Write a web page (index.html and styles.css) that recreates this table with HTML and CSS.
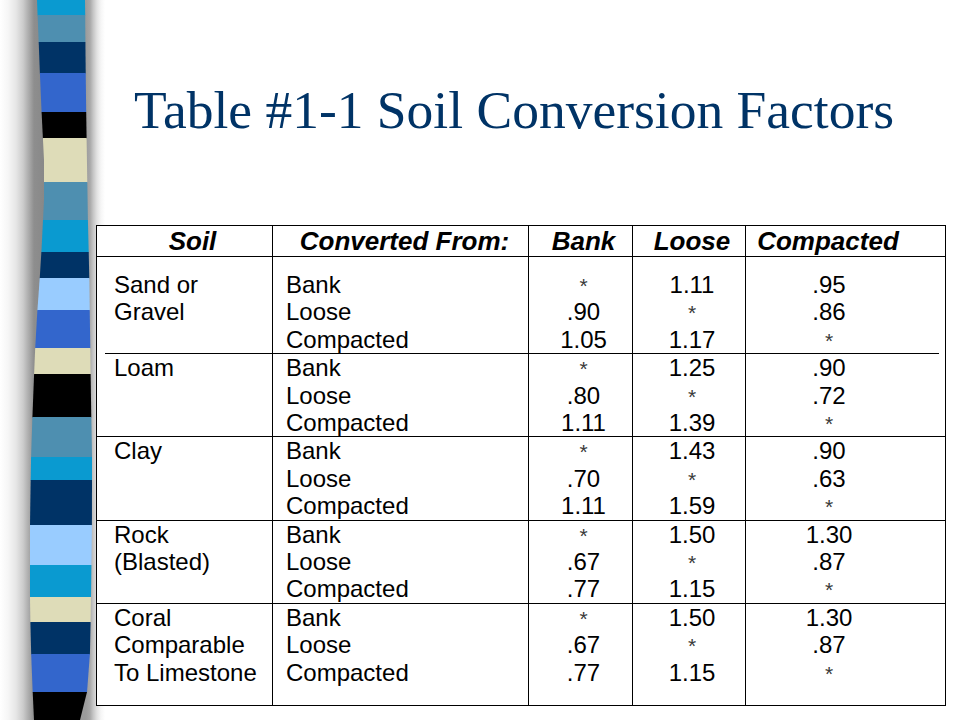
FILE: index.html
```html
<!DOCTYPE html>
<html>
<head>
<meta charset="utf-8">
<title>Table #1-1 Soil Conversion Factors</title>
<link rel="stylesheet" href="styles.css">
</head>
<body>
<div class="slide">
  <svg class="stripe" viewBox="0 0 110 720" width="110" height="720">
    <polygon fill="#0a9ad0" points="37,0 85,0 85.2,15.5 37.6,15.5"/>
    <polygon fill="#4e8fb0" points="37.6,15 85.2,15 85.4,42.5 38.7,42.5"/>
    <polygon fill="#003366" points="38.7,42 85.4,42 85.7,73.5 39.9,73.5"/>
    <polygon fill="#3366cc" points="39.9,73 85.7,73 86.2,112.5 41.6,112.5"/>
    <polygon fill="#000000" points="41.6,112 86.2,112 86.6,138.5 42.9,138.5"/>
    <polygon fill="#dedcb8" points="42.9,138 86.6,138 87.3,182.5 44,182.5 44,160"/>
    <polygon fill="#4e8fb0" points="44,182 87.3,182 87.9,220.5 43,220.5 44,200"/>
    <polygon fill="#0a9ad0" points="43,220 87.9,220 88.7,252.5 41.4,252.5"/>
    <polygon fill="#003366" points="41.4,252 88.7,252 89.3,278.5 39.7,278.5"/>
    <polygon fill="#99ccff" points="39.7,278 89.3,278 89.7,310.5 37.4,310.5"/>
    <polygon fill="#3366cc" points="37.4,310 89.7,310 90.3,348.5 35.2,348.5"/>
    <polygon fill="#dedcb8" points="35.2,348 90.3,348 90.6,374.5 34.1,374.5"/>
    <polygon fill="#000000" points="34.1,374 90.6,374 91.3,417.5 32.4,417.5"/>
    <polygon fill="#4e8fb0" points="32.4,417 91.3,417 92,457.5 31.1,457.5"/>
    <polygon fill="#0a9ad0" points="31.1,457 92,457 92,480.5 30.7,480.5"/>
    <polygon fill="#003366" points="30.7,480 92,480 91.9,525.5 30,525.5"/>
    <polygon fill="#99ccff" points="30,525 91.9,525 91.4,565.5 30,565.5"/>
    <polygon fill="#0a9ad0" points="30,565 91.4,565 91,597.5 30,597.5"/>
    <polygon fill="#dedcb8" points="30,597 91,597 90.6,622.5 30.4,622.5"/>
    <polygon fill="#003366" points="30.4,622 90.6,622 89.9,654.5 31.2,654.5"/>
    <polygon fill="#3366cc" points="31.2,654 89.9,654 87,692.5 32.7,692.5"/>
    <polygon fill="#000000" points="32.7,692 87,692 80,720 34,720"/>
  </svg>
  <main class="content">
    <h1 class="title">Table #1-1 Soil Conversion Factors</h1>
    <table class="factors">
      <colgroup>
        <col class="w-soil"><col class="w-from"><col class="w-bank"><col class="w-loose"><col class="w-comp">
      </colgroup>
      <thead>
        <tr>
          <th class="h-soil">Soil</th>
          <th class="h-from">Converted From:</th>
          <th class="h-num">Bank</th>
          <th class="h-num">Loose</th>
          <th class="h-comp">Compacted</th>
        </tr>
      </thead>
      <tbody>
        <tr class="first">
          <td class="soil">Sand or<br>Gravel</td>
          <td class="from">Bank<br>Loose<br>Compacted</td>
          <td class="num"><span class="ast">*</span><br>.90<br>1.05</td>
          <td class="num">1.11<br><span class="ast">*</span><br>1.17</td>
          <td class="comp">.95<br>.86<br><span class="ast">*</span></td>
        </tr>
        <tr class="rule"><td colspan="5"><div class="rule-line"></div></td></tr>
        <tr>
          <td class="soil">Loam</td>
          <td class="from">Bank<br>Loose<br>Compacted</td>
          <td class="num"><span class="ast">*</span><br>.80<br>1.11</td>
          <td class="num">1.25<br><span class="ast">*</span><br>1.39</td>
          <td class="comp">.90<br>.72<br><span class="ast">*</span></td>
        </tr>
        <tr class="sep">
          <td class="soil">Clay</td>
          <td class="from">Bank<br>Loose<br>Compacted</td>
          <td class="num"><span class="ast">*</span><br>.70<br>1.11</td>
          <td class="num">1.43<br><span class="ast">*</span><br>1.59</td>
          <td class="comp">.90<br>.63<br><span class="ast">*</span></td>
        </tr>
        <tr class="sep">
          <td class="soil">Rock<br>(Blasted)</td>
          <td class="from">Bank<br>Loose<br>Compacted</td>
          <td class="num"><span class="ast">*</span><br>.67<br>.77</td>
          <td class="num">1.50<br><span class="ast">*</span><br>1.15</td>
          <td class="comp">1.30<br>.87<br><span class="ast">*</span></td>
        </tr>
        <tr class="sep last">
          <td class="soil">Coral<br>Comparable<br>To Limestone</td>
          <td class="from">Bank<br>Loose<br>Compacted</td>
          <td class="num"><span class="ast">*</span><br>.67<br>.77</td>
          <td class="num">1.50<br><span class="ast">*</span><br>1.15</td>
          <td class="comp">1.30<br>.87<br><span class="ast">*</span></td>
        </tr>
      </tbody>
    </table>
  </main>
</div>
</body>
</html>
```

FILE: styles.css
```css
html, body {
  margin: 0;
  padding: 0;
  background: #ffffff;
}

body {
  width: 960px;
  height: 720px;
  overflow: hidden;
  font-family: "Liberation Sans", Arial, sans-serif;
  color: #000000;
}

.slide {
  display: flex;
  width: 960px;
  height: 720px;
}

.stripe {
  flex: none;
  display: block;
  width: 110px;
  height: 720px;
  margin-right: -14px;
  background: linear-gradient(to right,
    #ffffff 0px,
    #f6f6f6 8px,
    #e6e6e6 16px,
    #cccccc 23px,
    #aaaaaa 29px,
    #8e8e8e 34px,
    #888888 44px,
    #9c9c9c 86px,
    #a8a8a8 90px,
    #c4c4c4 93px,
    #e2e2e2 97px,
    #f6f6f6 101px,
    #ffffff 105px);
}

.content {
  flex: 1;
  padding-top: 80px;
}

.title {
  margin: 0 0 84px 38px;
  font-family: "Liberation Serif", "Times New Roman", serif;
  font-weight: normal;
  font-size: 53.5px;
  line-height: 61px;
  color: #003366;
  white-space: nowrap;
}

.factors {
  width: 849px;
  border-collapse: collapse;
  table-layout: fixed;
  border: 1px solid #000000;
  background: #ffffff;
}

.w-soil { width: 176px; }
.w-from { width: 256px; }
.w-bank { width: 104px; }
.w-loose { width: 113px; }
.w-comp { width: 200px; }

.factors th {
  height: 30px;
  padding: 0;
  font-size: 26px;
  line-height: 30px;
  font-weight: bold;
  font-style: italic;
  text-align: center;
  white-space: nowrap;
  border-left: 1px solid #000000;
  border-bottom: 1px solid #000000;
}

.factors th.h-soil { padding-left: 16px; }
.factors th.h-from { padding-left: 8px; }
.factors th.h-num { padding-left: 6px; }
.factors th.h-comp { padding-right: 35px; }

.factors td {
  padding: 0;
  vertical-align: top;
  font-size: 24px;
  line-height: 27.4px;
  white-space: nowrap;
  border-left: 1px solid #000000;
}

.factors td.soil { padding-left: 17px; text-align: left; }
.factors td.from { padding-left: 13px; text-align: left; }
.factors td.num { padding-left: 6px; text-align: center; }
.factors td.comp { padding-right: 33px; text-align: center; }

.ast {
  font-size: 21px;
  line-height: 1;
  color: #3a3a3a;
}

.factors tr.first td { padding-top: 14px; }
.factors tr.last td { padding-bottom: 19px; }
.factors tr.sep td { border-top: 1px solid #000000; }

.factors tr.rule td {
  padding: 0;
  height: 1px;
  border: none;
}

.rule-line {
  height: 1px;
  margin: 0 6px 0 8px;
  background: #000000;
}
```
